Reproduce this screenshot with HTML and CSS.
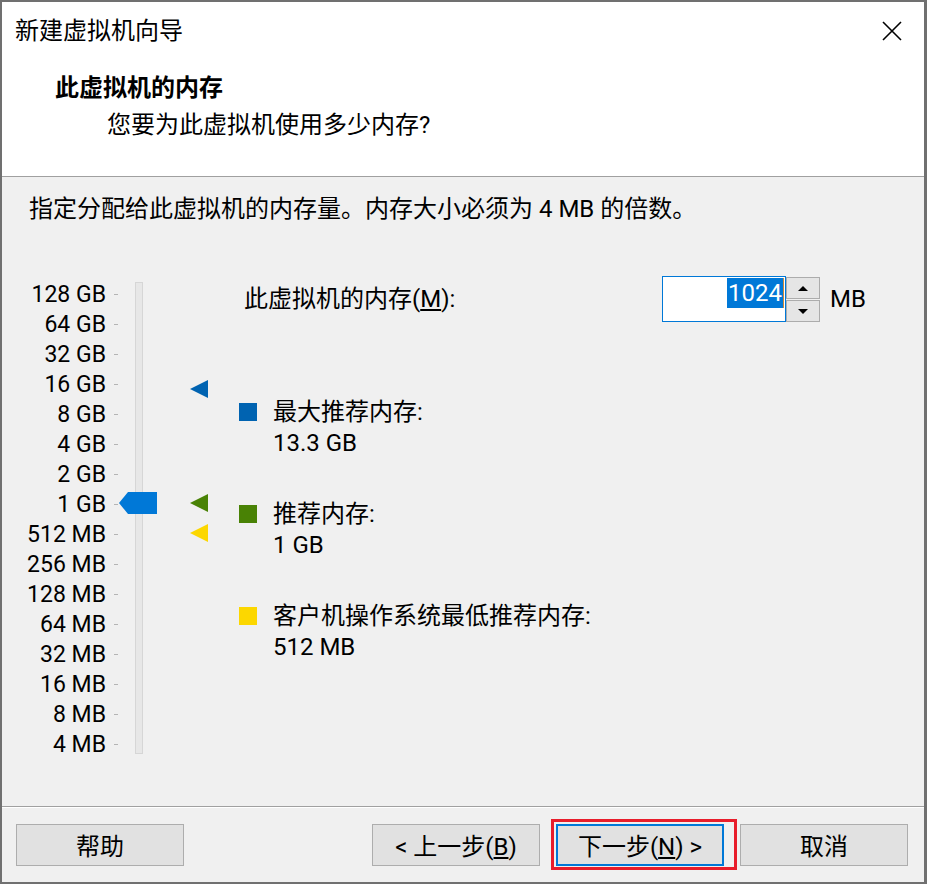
FILE: index.html
```html
<!DOCTYPE html>
<html lang="zh-CN">
<head>
  <meta charset="UTF-8">
  <title>新建虚拟机向导</title>
  <link rel="stylesheet" href="styles.css">
</head>
<body>
  <div class="window">
    <header class="header">
      <div class="titlebar">
        <span class="title">新建虚拟机向导</span>
        <svg class="close" width="20" height="20" viewBox="0 0 20 20">
          <path d="M1 1 L19 19 M19 1 L1 19" stroke="#000" stroke-width="1.6" fill="none"/>
        </svg>
      </div>
      <h1 class="page-title">此虚拟机的内存</h1>
      <p class="page-sub">您要为此虚拟机使用多少内存?</p>
    </header>
    <main class="body">
      <p class="intro">指定分配给此虚拟机的内存量。内存大小必须为 4 MB 的倍数。</p>
      <div class="content">
        <div class="scale">
          <ul class="scale-labels">
            <li>128 GB</li>
            <li>64 GB</li>
            <li>32 GB</li>
            <li>16 GB</li>
            <li>8 GB</li>
            <li>4 GB</li>
            <li>2 GB</li>
            <li>1 GB</li>
            <li>512 MB</li>
            <li>256 MB</li>
            <li>128 MB</li>
            <li>64 MB</li>
            <li>32 MB</li>
            <li>16 MB</li>
            <li>8 MB</li>
            <li>4 MB</li>
          </ul>
          <div class="track"></div>
          <svg class="thumb" width="38" height="22" viewBox="0 0 38 22">
            <polygon points="9,0 38,0 38,22 9,22 0,11" fill="#0078d7"/>
          </svg>
          <span class="marker marker-max"></span>
          <span class="marker marker-rec"></span>
          <span class="marker marker-min"></span>
        </div>
        <div class="details">
          <div class="mem-row">
            <label class="mem-label" for="mem">此虚拟机的内存(<u>M</u>):</label>
            <div class="spin">
              <div class="spin-field" id="mem"><span class="sel">1024</span><span class="caret"></span></div>
              <div class="spin-buttons">
                <span class="spin-btn"><i class="arrow-up"></i></span>
                <span class="spin-btn"><i class="arrow-down"></i></span>
              </div>
            </div>
            <span class="unit">MB</span>
          </div>
          <div class="legend">
            <div class="legend-item">
              <span class="swatch swatch-blue"></span>
              <div>
                <div>最大推荐内存:</div>
                <div>13.3 GB</div>
              </div>
            </div>
            <div class="legend-item">
              <span class="swatch swatch-green"></span>
              <div>
                <div>推荐内存:</div>
                <div>1 GB</div>
              </div>
            </div>
            <div class="legend-item">
              <span class="swatch swatch-yellow"></span>
              <div>
                <div>客户机操作系统最低推荐内存:</div>
                <div>512 MB</div>
              </div>
            </div>
          </div>
        </div>
      </div>
    </main>
    <footer class="footer">
      <button class="btn">帮助</button>
      <div class="nav">
        <button class="btn">&lt; 上一步(<u>B</u>)</button>
        <div class="btn-wrap">
          <button class="btn btn-default">下一步(<u>N</u>) &gt;</button>
          <span class="highlight"></span>
        </div>
        <button class="btn">取消</button>
      </div>
    </footer>
  </div>
</body>
</html>
```

FILE: styles.css
```css
* {
  box-sizing: border-box;
}
body {
  margin: 0;
  padding: 0;
  font-family: Roboto, "Noto Sans CJK SC", sans-serif;
  font-size: 24px;
  color: #000;
  background: #fff;
}
.window {
  width: 927px;
  height: 884px;
  display: flex;
  flex-direction: column;
  border-style: solid;
  border-color: #707070;
  border-width: 2px 3px 2px 2px;
  background: #f0f0f0;
}
.header {
  background: #fff;
  height: 175px;
  border-bottom: 1px solid #a0a0a0;
  flex: none;
}
.titlebar {
  height: 58px;
  display: flex;
  align-items: center;
  justify-content: space-between;
  padding: 0 22px 0 13px;
}
.title {
  line-height: 30px;
}
.page-title {
  margin: 13px 0 0 53px;
  font-size: 24px;
  font-weight: bold;
  line-height: 30px;
}
.page-sub {
  margin: 7px 0 0 105px;
  line-height: 30px;
}
.body {
  flex: 1;
  padding-top: 17px;
}
.intro {
  margin: 0 0 0 27px;
  line-height: 30px;
}
.content {
  display: flex;
  margin-top: 52px;
}
.scale {
  position: relative;
  display: flex;
  flex: none;
  width: 237px;
}
.scale-labels {
  list-style: none;
  margin: 0;
  padding: 3px 0 0;
  width: 116px;
  font-size: 23px;
}
.scale-labels li {
  height: 30px;
  display: flex;
  align-items: center;
  justify-content: flex-end;
  white-space: nowrap;
}
.scale-labels li::after {
  content: "";
  width: 4px;
  height: 1px;
  margin-left: 8px;
  background: #b4b4b4;
}
.track {
  margin: 6px 0 0 17px;
  width: 8px;
  height: 472px;
  background: #e7e7e7;
  border: 1px solid #d6d6d6;
}
.thumb {
  position: absolute;
  left: 117px;
  top: 216px;
}
.marker {
  position: absolute;
  left: 188px;
  width: 0;
  height: 0;
  border-top: 9px solid transparent;
  border-bottom: 9px solid transparent;
  border-right: 18px solid #0063b1;
}
.marker-max {
  top: 104px;
}
.marker-rec {
  top: 218px;
  border-right-color: #498205;
}
.marker-min {
  top: 248px;
  border-right-color: #fcd700;
}
.details {
  display: flex;
  flex-direction: column;
}
.mem-row {
  display: flex;
  align-items: center;
  height: 46px;
  padding-left: 5px;
}
.mem-label {
  width: 418px;
  line-height: 30px;
}
.spin {
  display: flex;
  height: 46px;
}
.spin-field {
  width: 124px;
  height: 46px;
  border: 1px solid #0078d7;
  background: #fff;
  display: flex;
  justify-content: flex-end;
  align-items: flex-start;
  padding: 1px 1px 0 0;
}
.sel {
  background: #0078d7;
  color: #fff;
  line-height: 30px;
  padding: 0 1px;
}
.caret {
  width: 1px;
  height: 30px;
  background: #c98a3a;
}
.spin-buttons {
  display: flex;
  flex-direction: column;
  width: 34px;
  padding-top: 1px;
}
.spin-btn {
  flex: 1;
  display: flex;
  align-items: center;
  justify-content: center;
  background: #e5e5e5;
  border: 1px solid #acacac;
}
.spin-btn + .spin-btn {
  margin-top: 1px;
}
.arrow-up {
  width: 0;
  height: 0;
  border-left: 5px solid transparent;
  border-right: 5px solid transparent;
  border-bottom: 5px solid #000;
}
.arrow-down {
  width: 0;
  height: 0;
  border-left: 5px solid transparent;
  border-right: 5px solid transparent;
  border-top: 5px solid #000;
}
.unit {
  margin-left: 10px;
  line-height: 30px;
}
.legend {
  display: flex;
  flex-direction: column;
  gap: 40px;
  margin-top: 75px;
}
.legend-item {
  display: flex;
  line-height: 31px;
}
.swatch {
  width: 18px;
  height: 18px;
  margin: 6px 16px 0 0;
  flex: none;
}
.swatch-blue {
  background: #0063b1;
}
.swatch-green {
  background: #498205;
}
.swatch-yellow {
  background: #fcd700;
}
.footer {
  flex: none;
  height: 76px;
  border-top: 1px solid #a0a0a0;
  box-shadow: inset 0 1px #fff;
  display: flex;
  justify-content: space-between;
  padding: 17px 16px 0 14px;
}
.nav {
  display: flex;
  gap: 16px;
  height: 42px;
}
.btn {
  width: 168px;
  height: 42px;
  background: #e1e1e1;
  border: 1px solid #adadad;
  font-family: inherit;
  font-size: 24px;
  color: #000;
  padding: 4px 0 0;
  line-height: 30px;
}
.btn-default {
  border: 2px solid #0078d7;
}
.btn-wrap {
  position: relative;
}
.highlight {
  position: absolute;
  left: -5px;
  right: -13px;
  top: -5px;
  bottom: -4px;
  border: 3px solid #e81d2b;
  pointer-events: none;
}
```
